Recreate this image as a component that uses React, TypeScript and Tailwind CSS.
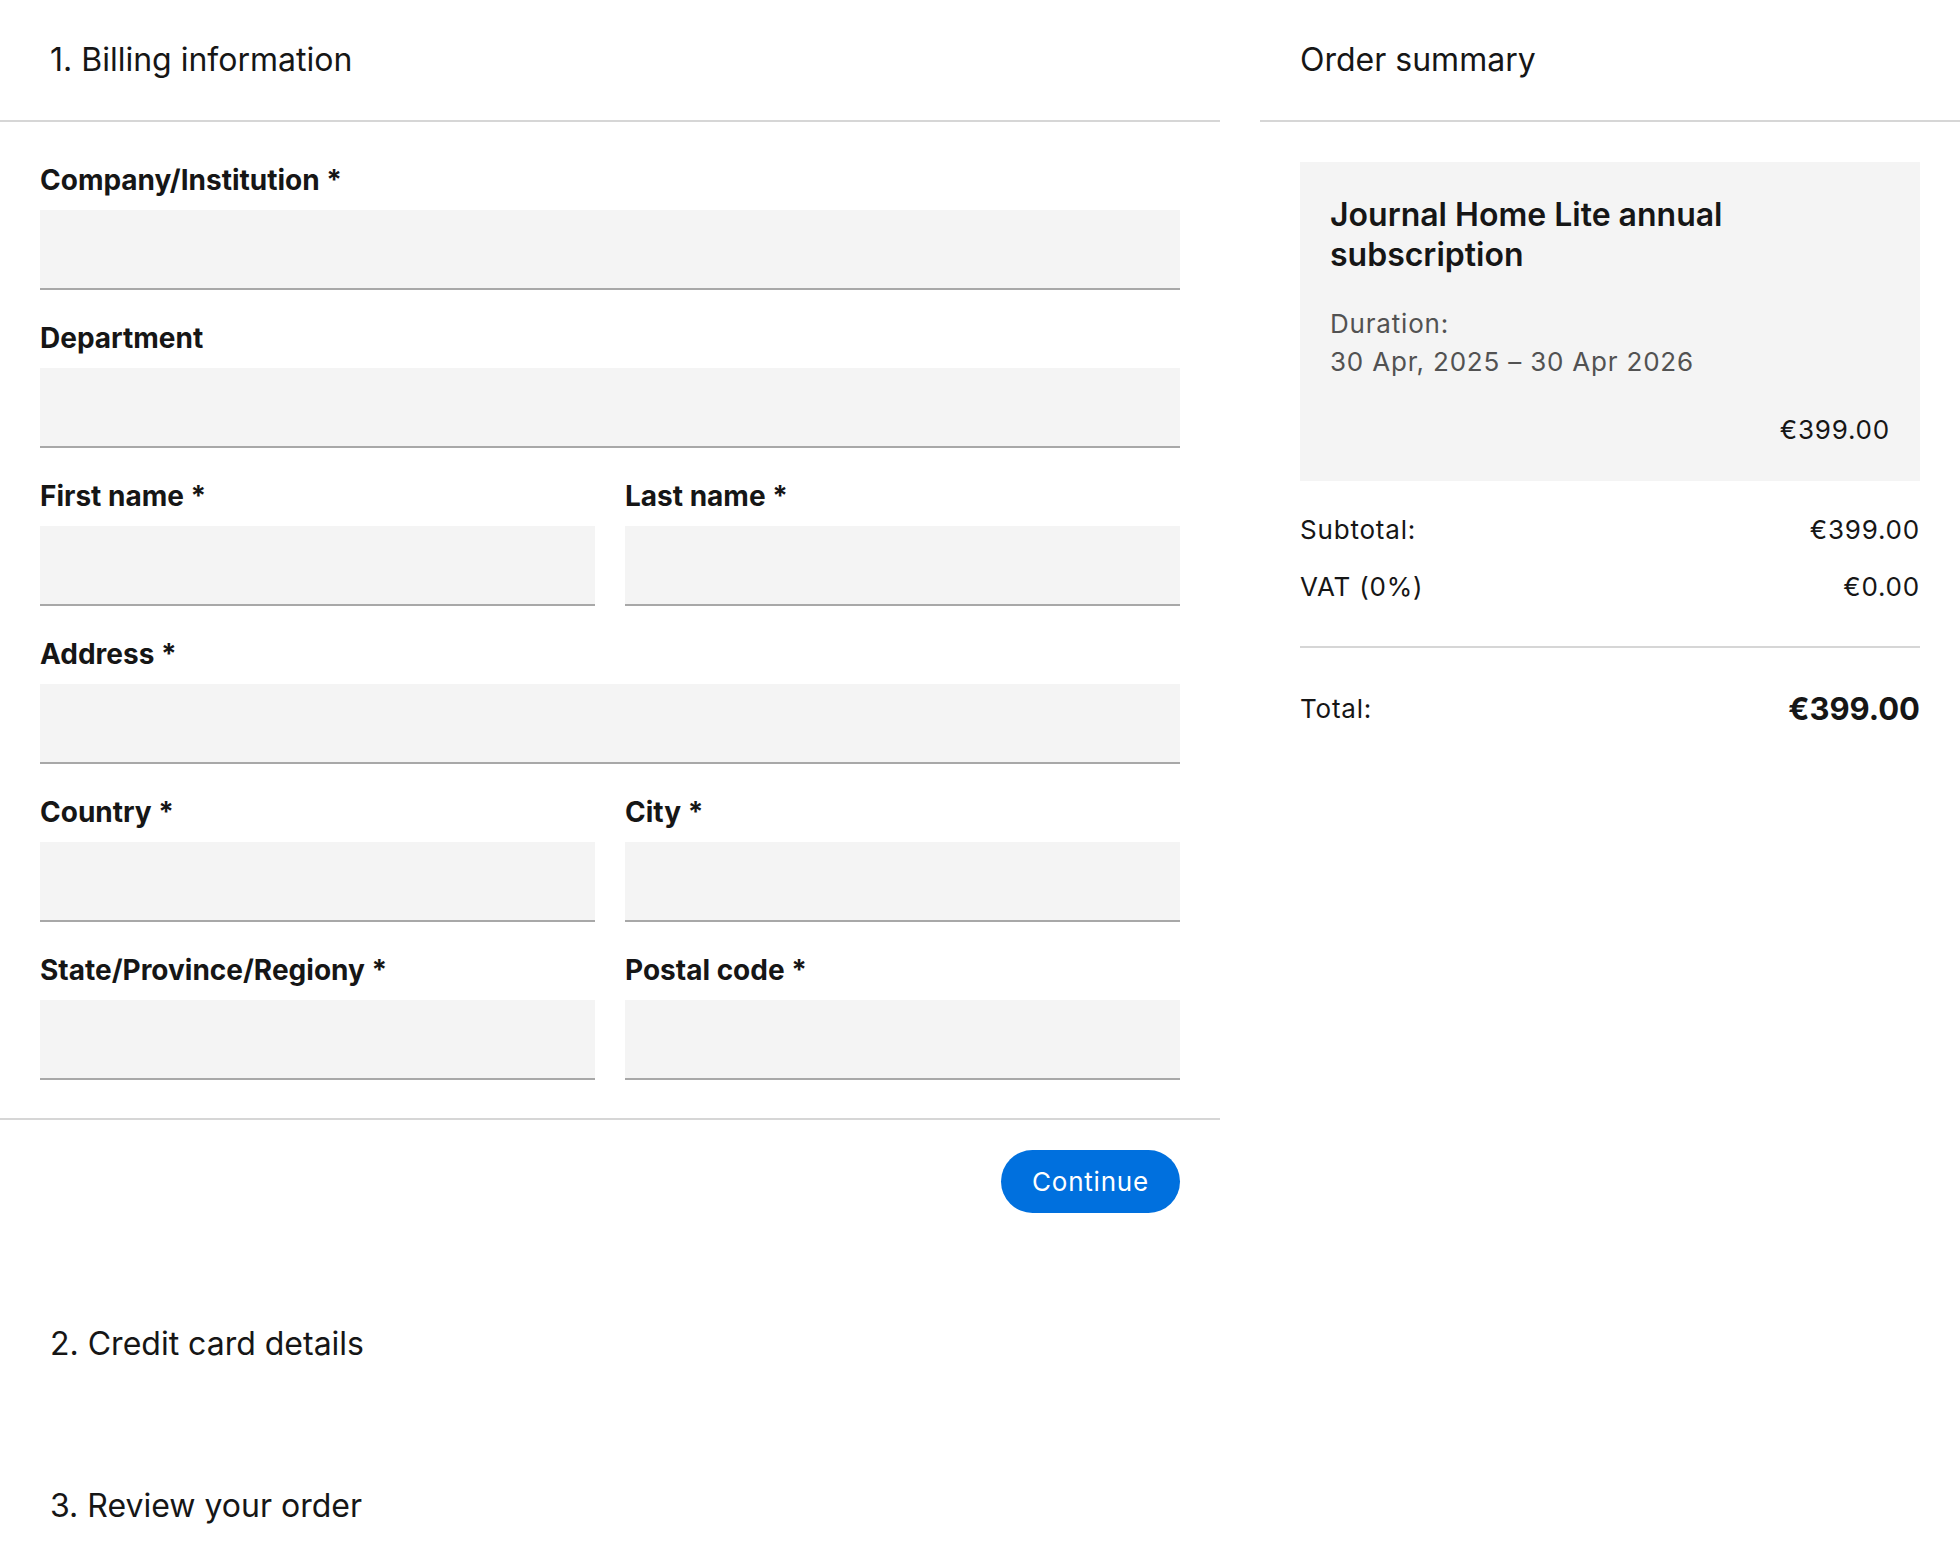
const font = { fontFamily: 'Inter, "Noto Sans", sans-serif' };

type FieldProps = { label: string };

const Field = ({ label }: FieldProps) => (
  <div className="flex flex-col">
    <label className="mb-[15px] text-[28px] font-bold leading-[30px] text-[#161616]">{label}</label>
    <input
      type="text"
      className="h-[80px] w-full border-0 border-b-2 border-[#a8a8a8] bg-[#f4f4f4] px-4 outline-none"
    />
  </div>
);

const StepHeader = ({ title, border, pad = 'px-[50px]' }: { title: string; border?: boolean; pad?: string }) => (
  <div
    className={
      border
        ? `flex h-[122px] items-center border-b-2 border-[#d6d6d6] ${pad}`
        : `flex h-[120px] items-center ${pad}`
    }
  >
    <h2 className="text-[32px] font-normal leading-[40px] text-[#161616]">{title}</h2>
  </div>
);

const SummaryRow = ({ label, value }: { label: string; value: string }) => (
  <div className="flex items-center justify-between text-[26px] leading-[38px] tracking-[0.8px] text-[#161616]">
    <span>{label}</span>
    <span>{value}</span>
  </div>
);

export default function App() {
  return (
    <div className="min-h-screen w-full bg-white" style={font}>
      <div className="flex gap-[40px]">
        {/* Checkout steps */}
        <div className="w-[1220px] shrink-0">
          <StepHeader title="1. Billing information" border />

          <div className="flex flex-col gap-[33px] px-[40px] pt-[43px] pb-[38px]">
            <Field label="Company/Institution *" />
            <Field label="Department" />
            <div className="grid grid-cols-2 gap-x-[30px]">
              <Field label="First name *" />
              <Field label="Last name *" />
            </div>
            <Field label="Address *" />
            <div className="grid grid-cols-2 gap-x-[30px]">
              <Field label="Country *" />
              <Field label="City *" />
            </div>
            <div className="grid grid-cols-2 gap-x-[30px]">
              <Field label="State/Province/Regiony *" />
              <Field label="Postal code *" />
            </div>
          </div>

          <div className="flex justify-end border-t-2 border-[#d6d6d6] px-[40px] pt-[30px] pb-[71px]">
            <button className="h-[63px] rounded-full bg-[#0070de] px-[31px] text-[26px] tracking-[0.8px] text-white">
              Continue
            </button>
          </div>

          <div className="flex flex-col gap-[42px]">
            <StepHeader title="2. Credit card details" />
            <StepHeader title="3. Review your order" />
          </div>
        </div>

        {/* Order summary */}
        <div className="flex-1">
          <StepHeader title="Order summary" border pad="px-[40px]" />
          <div className="px-[40px] pt-[40px]">
            <div className="bg-[#f4f4f4] px-[30px] pt-[33px] pb-[32px]">
              <h3 className="max-w-[480px] text-[32px] font-semibold leading-[40px] text-[#161616]">
                Journal Home Lite annual subscription
              </h3>
              <div className="mt-[30px] text-[26px] leading-[38px] tracking-[0.8px] text-[#525252]">
                <div>Duration:</div>
                <div>30 Apr, 2025 – 30 Apr 2026</div>
              </div>
              <div className="mt-[30px] text-right text-[26px] leading-[38px] tracking-[0.8px] text-[#161616]">
                €399.00
              </div>
            </div>

            <div className="flex flex-col gap-[19px] pt-[30px] pb-[40px]">
              <SummaryRow label="Subtotal:" value="€399.00" />
              <SummaryRow label="VAT (0%)" value="€0.00" />
            </div>

            <div className="flex items-center justify-between border-t-2 border-[#d6d6d6] pt-[41px]">
              <span className="text-[26px] leading-[40px] tracking-[0.8px] text-[#161616]">Total:</span>
              <span className="text-[31px] font-bold leading-[40px] text-[#161616]">€399.00</span>
            </div>
          </div>
        </div>
      </div>
    </div>
  );
}
